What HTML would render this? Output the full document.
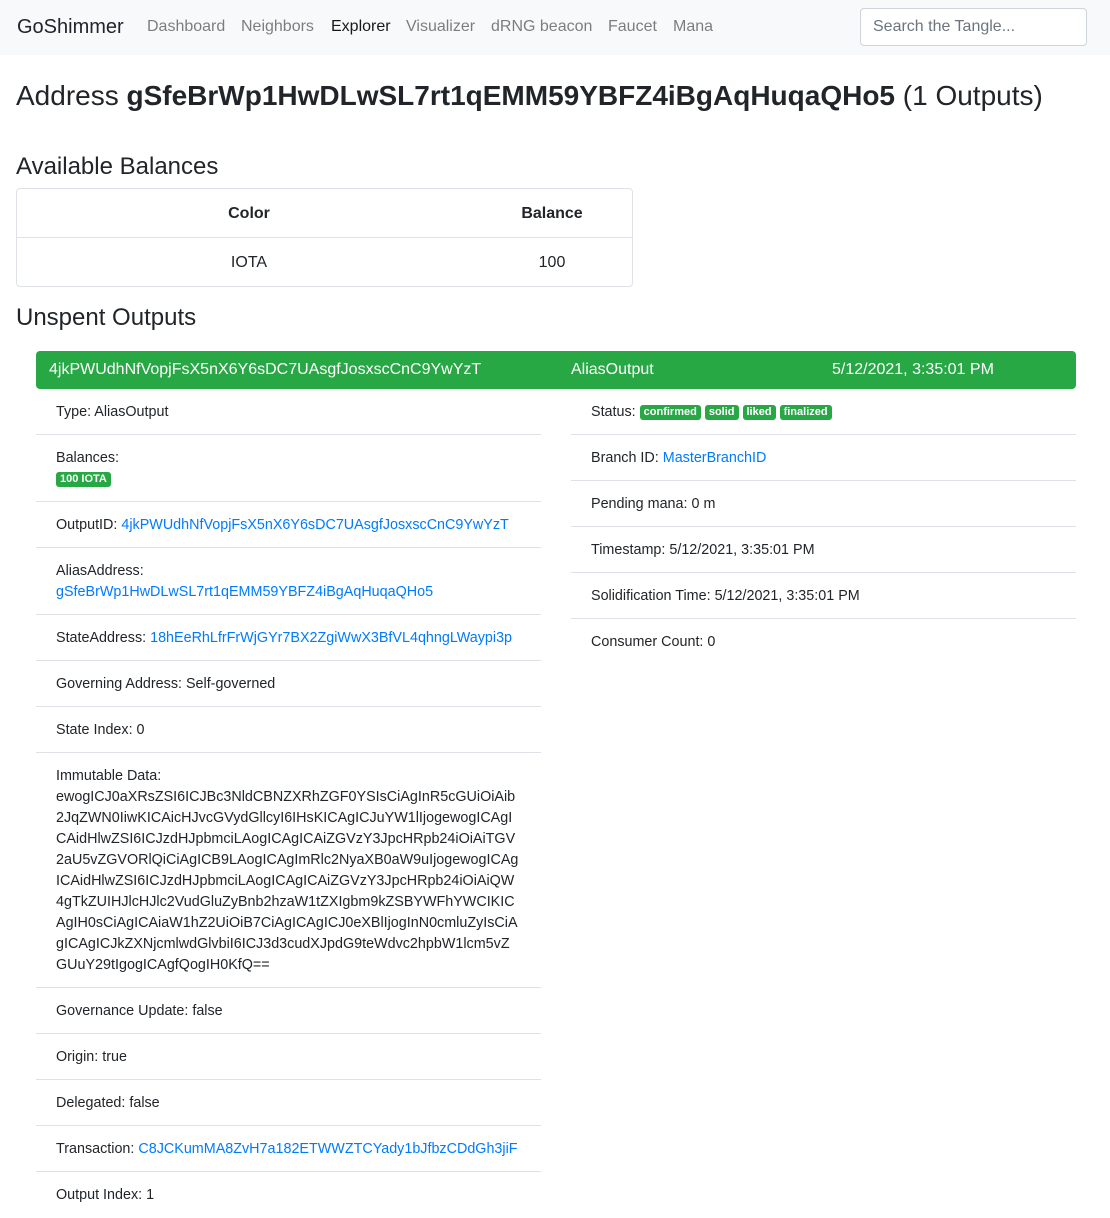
<!DOCTYPE html>
<html><head><meta charset="utf-8"><style>
*{box-sizing:border-box;margin:0;padding:0}
body{width:1110px;height:1214px;overflow:hidden;background:#fff;font-family:"Liberation Sans",sans-serif;color:#212529;position:relative}
.nav{position:absolute;left:0;top:0;width:1110px;height:55px;background:#f8f9fa}
.nav span{position:absolute;top:18px;font-size:16px;color:rgba(0,0,0,.5)}
.brand{font-size:20px!important;color:#212529!important;top:16px!important}
.search{position:absolute;left:860px;top:8px;width:227px;height:38px;border:1px solid #ced4da;border-radius:4px;background:#fff;font-size:16px;color:#6c757d;padding:9px 12px}
h1{position:absolute;left:16px;top:80px;font-size:28px;font-weight:400;white-space:nowrap}
h2{position:absolute;left:16px;font-size:24px;font-weight:400}
.tbl{position:absolute;left:16px;top:188px;width:617px;height:99px;border:1px solid #dee2e6;border-radius:4px;font-size:16px}
.tbl div{position:absolute;transform:translateX(-50%)}
.bar{position:absolute;left:36px;top:351px;width:1040px;height:38px;background:#28a745;border-radius:4px;color:#fff;font-size:16px}
.bar span{position:absolute;top:10px}
.it{position:absolute;font-size:14.35px;line-height:21px;padding-left:20px;border-bottom:1px solid #dee2e6;padding-top:13px!important}
.l{left:36px;width:505px}.r{left:571px;width:505px}
a{color:#007bff;text-decoration:none}
.b{display:inline-block;background:#28a745;color:#fff;font-size:11px;font-weight:700;padding:2px 4px;border-radius:3px;line-height:11px;vertical-align:1px}
</style></head><body>
<div class="nav">
<span class="brand" style="left:17px">GoShimmer</span>
<span style="left:147px">Dashboard</span><span style="left:241px">Neighbors</span><span style="left:331px;color:rgba(0,0,0,.9)">Explorer</span><span style="left:406px">Visualizer</span><span style="left:491px">dRNG beacon</span><span style="left:608px">Faucet</span><span style="left:673px">Mana</span>
<div class="search">Search the Tangle...</div>
</div>
<h1>Address <b>gSfeBrWp1HwDLwSL7rt1qEMM59YBFZ4iBgAqHuqaQHo5</b> (1 Outputs)</h1>
<h2 style="top:153px">Available Balances</h2>
<div class="tbl">
<div style="left:232px;top:16px;font-weight:700">Color</div><div style="left:535px;top:16px;font-weight:700">Balance</div>
<div style="left:0;top:48px;width:615px;border-top:1px solid #dee2e6;transform:none"></div>
<div style="left:232px;top:65px">IOTA</div><div style="left:535px;top:65px">100</div>
</div>
<h2 style="top:304px">Unspent Outputs</h2>
<div class="bar"><span style="left:13px">4jkPWUdhNfVopjFsX5nX6Y6sDC7UAsgfJosxscCnC9YwYzT</span><span style="left:535px">AliasOutput</span><span style="left:796px">5/12/2021, 3:35:01 PM</span></div>

<div class="it l" style="top:389px;height:46px">Type: AliasOutput</div>
<div class="it l" style="top:435px;height:67px">Balances:<br><span class="b">100 IOTA</span></div>
<div class="it l" style="top:502px;height:46px">OutputID: <a>4jkPWUdhNfVopjFsX5nX6Y6sDC7UAsgfJosxscCnC9YwYzT</a></div>
<div class="it l" style="top:548px;height:67px">AliasAddress:<br><a>gSfeBrWp1HwDLwSL7rt1qEMM59YBFZ4iBgAqHuqaQHo5</a></div>
<div class="it l" style="top:615px;height:46px">StateAddress: <a>18hEeRhLfrFrWjGYr7BX2ZgiWwX3BfVL4qhngLWaypi3p</a></div>
<div class="it l" style="top:661px;height:46px">Governing Address: Self-governed</div>
<div class="it l" style="top:707px;height:46px">State Index: 0</div>
<div class="it l" style="top:753px;height:235px;white-space:nowrap">Immutable Data:<br>ewogICJ0aXRsZSI6ICJBc3NldCBNZXRhZGF0YSIsCiAgInR5cGUiOiAib<br>2JqZWN0IiwKICAicHJvcGVydGllcyI6IHsKICAgICJuYW1lIjogewogICAgI<br>CAidHlwZSI6ICJzdHJpbmciLAogICAgICAiZGVzY3JpcHRpb24iOiAiTGV<br>2aU5vZGVORlQiCiAgICB9LAogICAgImRlc2NyaXB0aW9uIjogewogICAg<br>ICAidHlwZSI6ICJzdHJpbmciLAogICAgICAiZGVzY3JpcHRpb24iOiAiQW<br>4gTkZUIHJlcHJlc2VudGluZyBnb2hzaW1tZXIgbm9kZSBYWFhYWCIKIC<br>AgIH0sCiAgICAiaW1hZ2UiOiB7CiAgICAgICJ0eXBlIjogInN0cmluZyIsCiA<br>gICAgICJkZXNjcmlwdGlvbiI6ICJ3d3cudXJpdG9teWdvc2hpbW1lcm5vZ<br>GUuY29tIgogICAgfQogIH0KfQ==</div>
<div class="it l" style="top:988px;height:46px">Governance Update: false</div>
<div class="it l" style="top:1034px;height:46px">Origin: true</div>
<div class="it l" style="top:1080px;height:46px">Delegated: false</div>
<div class="it l" style="top:1126px;height:46px">Transaction: <a>C8JCKumMA8ZvH7a182ETWWZTCYady1bJfbzCDdGh3jiF</a></div>
<div class="it l" style="top:1172px;height:46px;border:0">Output Index: 1</div>

<div class="it r" style="top:389px;height:46px">Status: <span class="b">confirmed</span> <span class="b">solid</span> <span class="b">liked</span> <span class="b">finalized</span></div>
<div class="it r" style="top:435px;height:46px">Branch ID: <a>MasterBranchID</a></div>
<div class="it r" style="top:481px;height:46px">Pending mana: 0 m</div>
<div class="it r" style="top:527px;height:46px">Timestamp: 5/12/2021, 3:35:01 PM</div>
<div class="it r" style="top:573px;height:46px">Solidification Time: 5/12/2021, 3:35:01 PM</div>
<div class="it r" style="top:619px;height:46px;border:0">Consumer Count: 0</div>
</body></html>
